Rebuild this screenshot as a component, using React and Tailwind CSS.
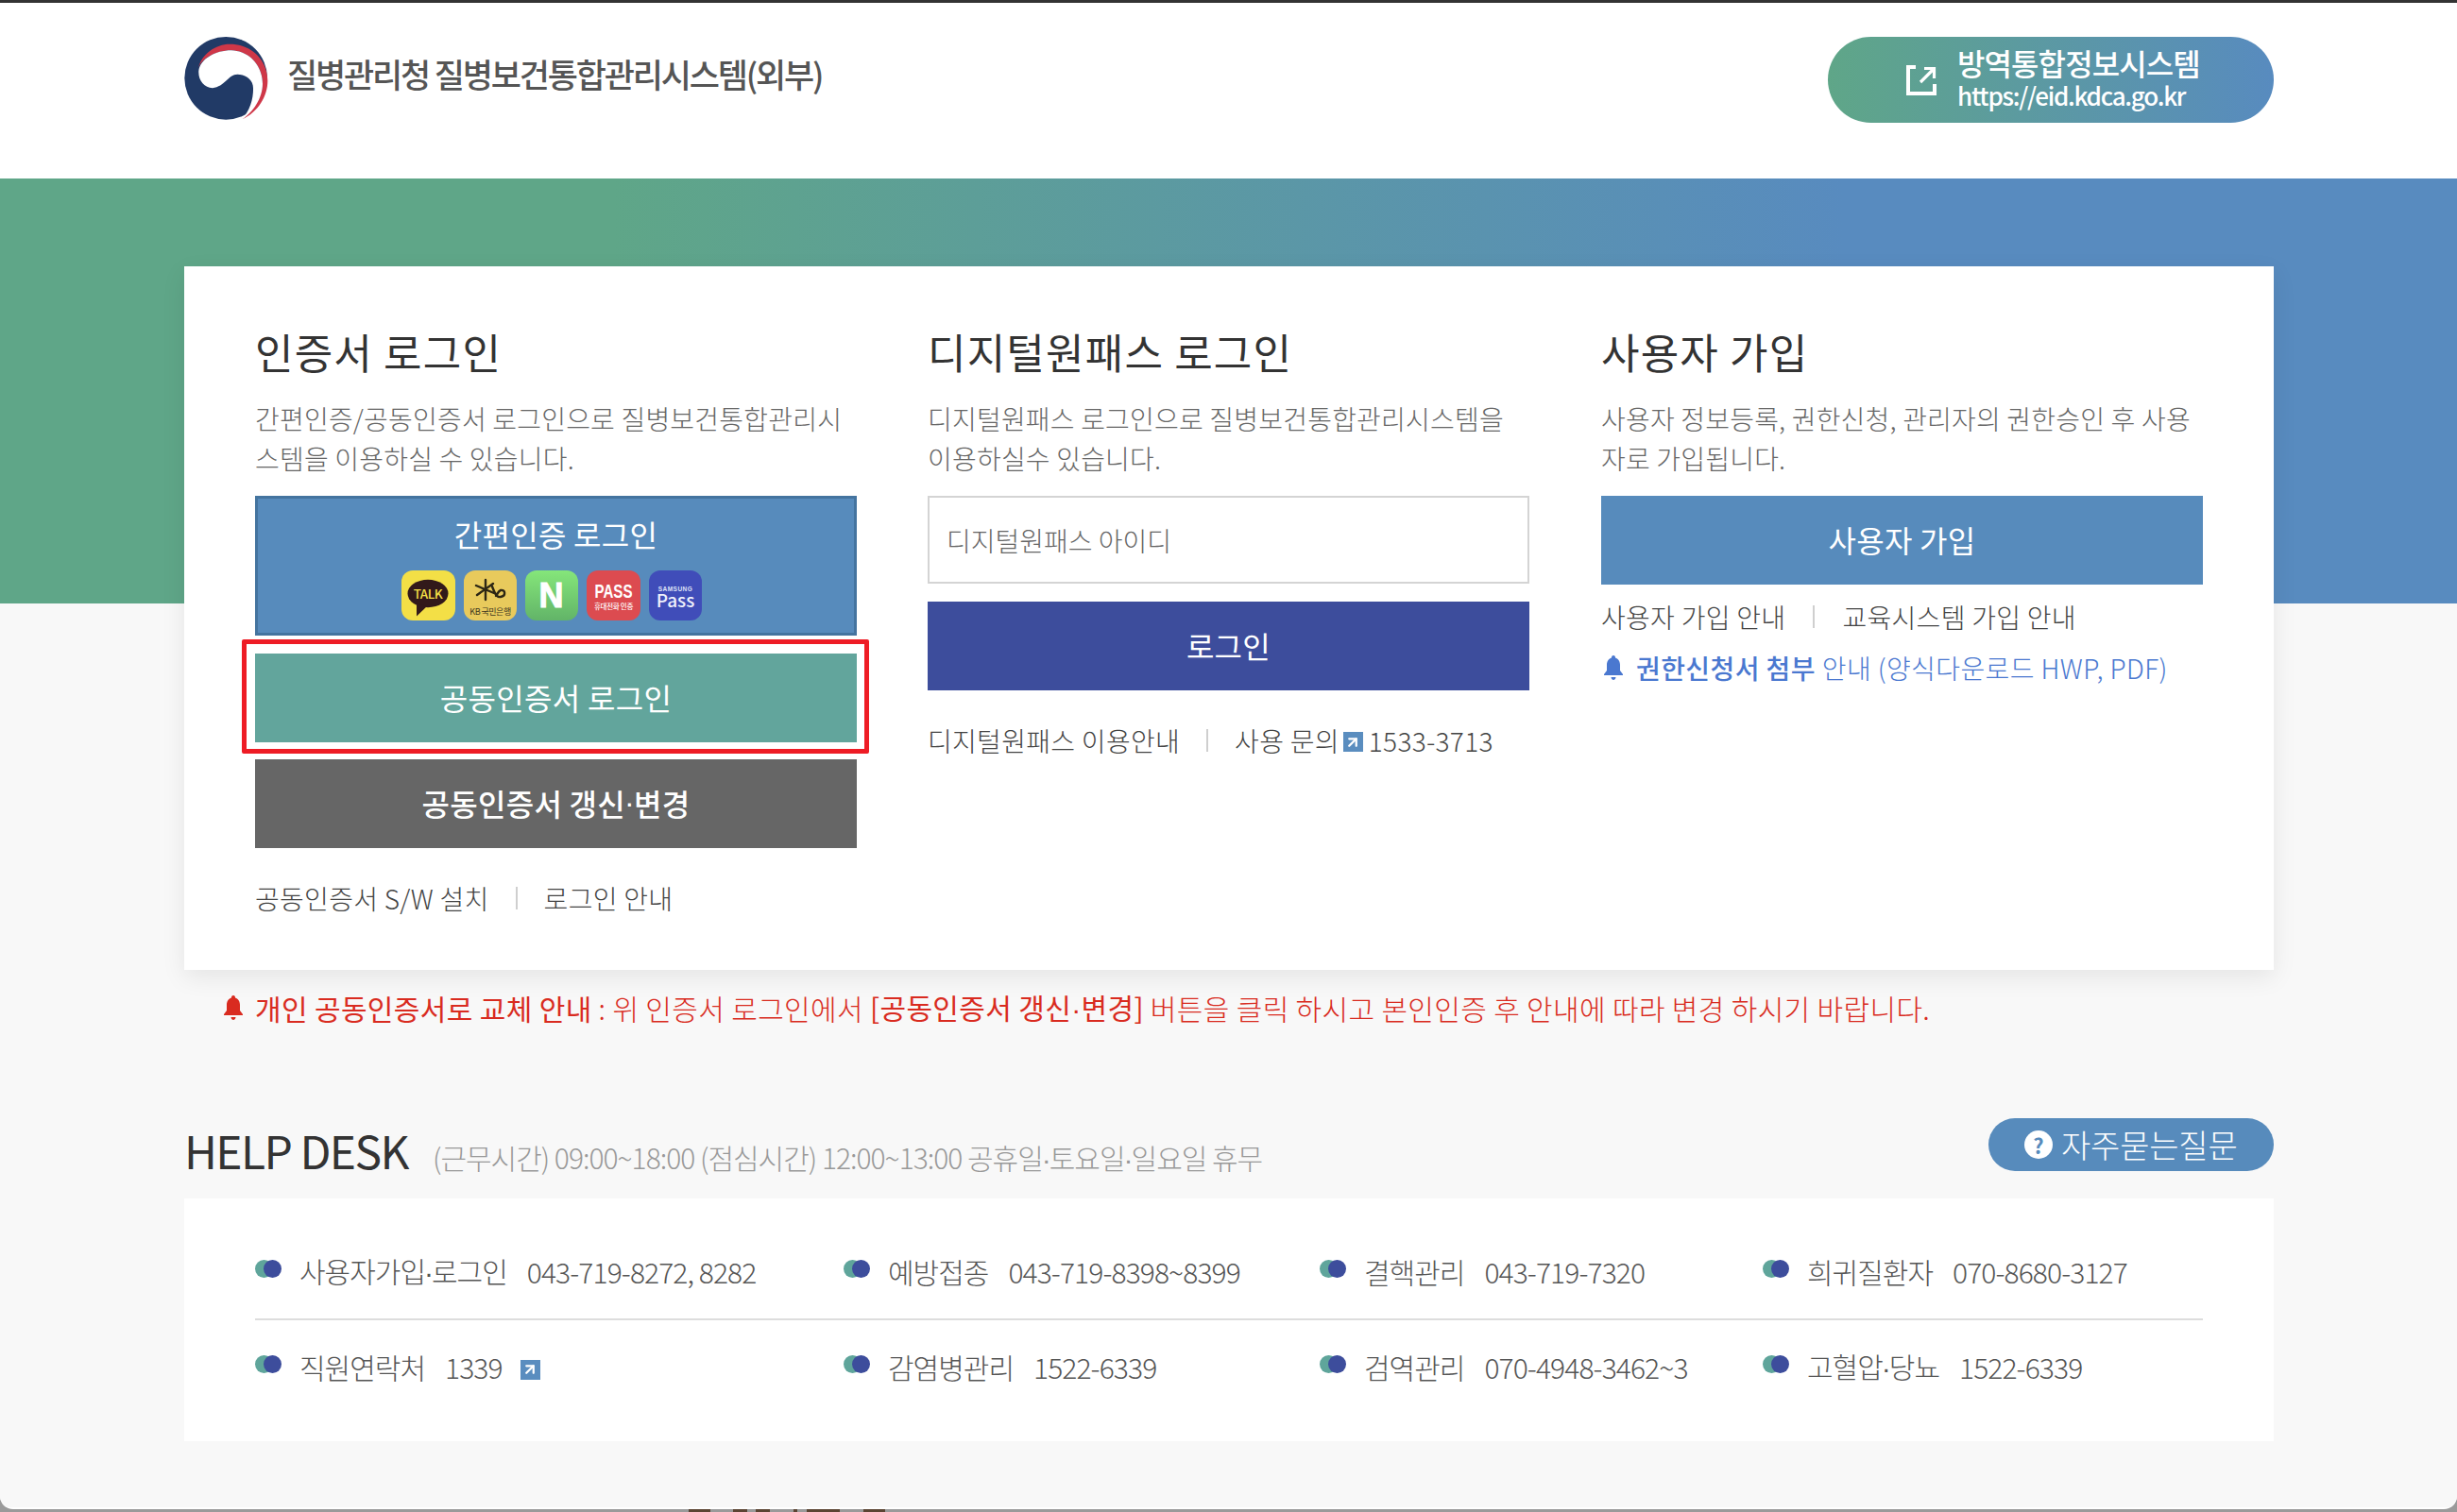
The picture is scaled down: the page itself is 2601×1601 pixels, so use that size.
import React from "react";
import { ArrowUpRight } from "lucide-react";

const FONT = "font-['Noto_Sans_CJK_KR','Noto_Sans',sans-serif]";
const svgFont = "'Noto Sans CJK KR', sans-serif";

const Logo = () => (
  <svg viewBox="30 15 268 265" className="w-[89px] h-[88px]">
    <circle cx="163" cy="147" r="132" fill="#213a66" />
    <path
      d="M75 115 C85 70 130 38 175 38 C245 38 296 90 296 155 C296 205 265 255 215 278 C250 250 278 210 280 165 C280 110 240 60 180 58 C130 58 85 85 75 115 Z"
      fill="#cf3748"
    />
    <path
      d="M76 125 C80 85 130 58 180 58 C240 60 280 110 280 165 C280 210 250 255 215 278 L212 280 C240 250 250 215 250 180 C250 150 225 135 200 135 C170 135 160 175 120 178 C95 178 75 155 76 125 Z"
      fill="#fff"
    />
  </svg>
);

const Bell = ({ className }) => (
  <svg viewBox="0 0 20 26" className={className} fill="currentColor">
    <path d="M10 0 C11.5 0 12 1 12 2.5 C15.5 3.5 17 7 17 10 V16 L20 20 V21 H0 V20 L3 16 V10 C3 7 4.5 3.5 8 2.5 C8 1 8.5 0 10 0 Z M7.5 23 H12.5 C12.5 25 11 26 10 26 C9 26 7.5 25 7.5 23 Z" />
  </svg>
);

const ExtIcon = () => (
  <span className="inline-flex w-[21px] h-[21px] items-center justify-center bg-[#5a8dbf] text-white">
    <ArrowUpRight size={18} strokeWidth={3} />
  </span>
);

const Divider = () => <span className="inline-block w-[2px] h-[24px] bg-[#cfcfcf]" />;

// the middle dot is much narrower in the original font
const Dotted = ({ text }) =>
  text.split("·").map((part, i) => (
    <React.Fragment key={i}>
      {i > 0 && <span className="font-['Liberation_Sans',sans-serif] -mx-[1px]">·</span>}
      {part}
    </React.Fragment>
  ));

const AuthIcons = () => (
  <div className="flex justify-center gap-[9px] mt-[15px] pr-[10px]">
    <svg viewBox="0 0 57 53" className="w-[57px] h-[53px] rounded-[12px] bg-[#f3df46]">
      <ellipse cx="28" cy="24.5" rx="21.5" ry="14.7" fill="#32191a" />
      <path d="M16 35 L16 48.5 L27 38 Z" fill="#32191a" />
      <text x="28" y="29.5" textAnchor="middle" fontSize="13.5" fontWeight="500" fill="#f3df46" fontFamily={svgFont} letterSpacing="-0.5">
        TALK
      </text>
    </svg>
    <svg viewBox="0 0 56 53" className="w-[56px] h-[53px] rounded-[12px] bg-[#e8ca5c]">
      <g stroke="#2c2614" strokeWidth="2.4" strokeLinecap="round" fill="none">
        <path d="M13 16 L32 24" />
        <path d="M14 26 L31 14" />
        <path d="M23 10 L23 31" />
        <path d="M30 17 C33 25 35 29 39 28 C45 27 44 20 39 21 C36 22 36 25 34 27" />
      </g>
      <text x="28" y="47" textAnchor="middle" fontSize="9" fontWeight="400" fill="#3a3420" fontFamily={svgFont} letterSpacing="-0.5">
        KB 국민은행
      </text>
    </svg>
    <div className="w-[56px] h-[53px] rounded-[12px] bg-[linear-gradient(#85e67a,#62b468)] flex items-center justify-center">
      <span className="text-white text-[36px] leading-none font-black font-['Liberation_Sans',sans-serif] [-webkit-text-stroke:1px_white]">N</span>
    </div>
    <svg viewBox="0 0 57 53" className="w-[57px] h-[53px] rounded-[12px] bg-[#dc4b50]">
      <text x="28.5" y="29" textAnchor="middle" fontSize="20" fontWeight="700" fill="#fff" fontFamily="'Liberation Sans', sans-serif" textLength="40" lengthAdjust="spacingAndGlyphs">
        PASS
      </text>
      <text x="28.5" y="41" textAnchor="middle" fontSize="7.5" fontWeight="500" fill="#fff" fontFamily={svgFont} letterSpacing="-0.3">
        휴대전화 인증
      </text>
    </svg>
    <svg viewBox="0 0 56 53" className="w-[56px] h-[53px] rounded-[12px] bg-[#404db9]">
      <text x="28" y="22" textAnchor="middle" fontSize="6.5" fontWeight="700" fill="#dfe3f7" fontFamily="'Liberation Sans', sans-serif" letterSpacing="0.5">
        SAMSUNG
      </text>
      <text x="28" y="39" textAnchor="middle" fontSize="19" fontWeight="500" fill="#eef0fb" fontFamily={svgFont}>
        Pass
      </text>
    </svg>
  </div>
);

const Column = ({ title, lines, children }) => (
  <div className="w-[637px] shrink-0">
    <h2 className="text-[44px] leading-[64px] text-[#333] font-normal tracking-[1.2px]">{title}</h2>
    <p className="mt-[18px] text-[28px] leading-[42px] text-[#666] font-light tracking-[0.2px] whitespace-nowrap">
      {lines[0]}
      <br />
      {lines[1]}
    </p>
    <div className="mt-[19px]">{children}</div>
  </div>
);

const Btn = ({ color, className = "", children }) => (
  <button className={`w-full h-[94px] flex items-center justify-center pb-[2px] text-white text-[32px] tracking-[0.3px] ${color} ${className}`}>
    {children}
  </button>
);

const contacts = [
  [
    ["사용자가입·로그인", "043-719-8272, 8282"],
    ["예방접종", "043-719-8398~8399"],
    ["결핵관리", "043-719-7320"],
    ["희귀질환자", "070-8680-3127"],
  ],
  [
    ["직원연락처", "1339", true],
    ["감염병관리", "1522-6339"],
    ["검역관리", "070-4948-3462~3"],
    ["고혈압·당뇨", "1522-6339"],
  ],
];

const Contact = ({ label, phone, ext }) => (
  <div className="flex items-center h-[60px] text-[30px] text-[#555] font-light tracking-[-1px] whitespace-nowrap">
    <span className="flex mb-[6px] mr-[19px]">
      <span className="w-[19px] h-[19px] rounded-full bg-[#5fa59b]" />
      <span className="w-[19px] h-[19px] rounded-full bg-[#3d4d9c] -ml-[10px]" />
    </span>
    <span><Dotted text={label} /></span>
    <span className="ml-[21px] tracking-[-0.9px]">{phone}</span>
    {ext && (
      <span className="ml-[19px] mt-[6px] flex">
        <ExtIcon />
      </span>
    )}
  </div>
);

export default function App() {
  return (
    <div className={`h-[1601px] bg-[#9a9a9a] overflow-hidden ${FONT}`}>
      <div className="h-[1598px] bg-white rounded-b-[14px] overflow-hidden">
        <header className="h-[189px] border-t-[3px] border-[#333] bg-white flex justify-between pl-[195px] pr-[194px] pt-[36px]">
          <div className="flex items-center h-[88px] self-start">
            <Logo />
            <span className="ml-[20px] text-[35px] font-medium text-[#555] tracking-[-2.2px] whitespace-nowrap -mt-[10px]">
              질병관리청 질병보건통합관리시스템(외부)
            </span>
          </div>
          <a className="w-[472px] h-[91px] rounded-full bg-[linear-gradient(90deg,#5fa688,#588bbf)] flex items-center text-white pl-[83px]">
            <svg viewBox="0 0 32 32" className="w-[32px] h-[32px]" fill="none" stroke="#fff" strokeWidth="4">
              <path d="M10 2 H2 V30 H30 V20" />
              <path d="M15 18 L28 5 M19 3.5 H29.5 V14" strokeWidth="3.2" />
            </svg>
            <div className="ml-[22px] -mt-[6px]">
              <div className="text-[32px] leading-[39px] font-medium tracking-[-0.9px]">방역통합정보시스템</div>
              <div className="text-[26px] leading-[30px] font-medium tracking-[-1.25px]">https://eid.kdca.go.kr</div>
            </div>
          </a>
        </header>

        <main className="h-[1407px] bg-[#f8f8f8] bg-[linear-gradient(90deg,#5fa688_25%,#588bbf_75%)] bg-no-repeat bg-[length:100%_450px] px-[194px]">
          <div className="pt-[93px] ml-[1px]">
            <section className="bg-white shadow-[0_8px_24px_rgba(0,0,0,0.08)] flex gap-[75px] px-[75px] pb-[56px] w-[2212px]">
              <div className="pt-[58px]">
                <Column
                  title="인증서 로그인"
                  lines={["간편인증/공동인증서 로그인으로 질병보건통합관리시", "스템을 이용하실 수 있습니다."]}
                >
                  <div className="w-full h-[148px] bg-[#578bbc] border-[3px] border-[#44749f] text-white text-[32px] text-center pt-[13px]">
                    <span className="block leading-[48px] tracking-[0.3px]">간편인증 로그인</span>
                    <AuthIcons />
                  </div>
                  <div className="relative mt-[19px]">
                    <Btn color="bg-[#62a59c]">공동인증서 로그인</Btn>
                    <div className="absolute -left-[14px] -right-[13px] -top-[15px] -bottom-[12px] border-[5px] border-[#ee1c25] rounded-[2px]" />
                  </div>
                  <Btn color="bg-[#666666]" className="mt-[18px] font-medium">
                    <Dotted text="공동인증서 갱신·변경" />
                  </Btn>
                  <div className="mt-[33px] h-[40px] flex items-center text-[28px] font-light text-[#444] tracking-[0.3px] whitespace-nowrap">
                    <span>공동인증서 S/W 설치</span>
                    <span className="mx-[28px] flex"><Divider /></span>
                    <span>로그인 안내</span>
                  </div>
                </Column>
              </div>

              <div className="pt-[58px]">
                <Column
                  title="디지털원패스 로그인"
                  lines={["디지털원패스 로그인으로 질병보건통합관리시스템을", "이용하실수 있습니다."]}
                >
                  <input
                    className="w-full h-[93px] border-[2px] border-[#d4d4d4] px-[18px] text-[28px] font-light placeholder:text-[#666] outline-none"
                    placeholder="디지털원패스 아이디"
                  />
                  <Btn color="bg-[#3d4d9c]" className="mt-[19px]">
                    로그인
                  </Btn>
                  <div className="mt-[33px] h-[40px] flex items-center text-[28px] font-light text-[#444] tracking-[0.3px] whitespace-nowrap">
                    <span>디지털원패스 이용안내</span>
                    <span className="mx-[28px] flex"><Divider /></span>
                    <span>사용 문의</span>
                    <span className="ml-[4px] mr-[6px] mt-[3px] flex"><ExtIcon /></span>
                    <span>1533-3713</span>
                  </div>
                </Column>
              </div>

              <div className="pt-[58px] ml-[1px]">
                <Column
                  title="사용자 가입"
                  lines={["사용자 정보등록, 권한신청, 관리자의 권한승인 후 사용", "자로 가입됩니다."]}
                >
                  <Btn color="bg-[#578bbc]" className="h-[93px]">
                    사용자 가입
                  </Btn>
                  <div className="mt-[14px] h-[40px] flex items-center text-[28px] font-light text-[#444] tracking-[0.3px] whitespace-nowrap">
                    <span>사용자 가입 안내</span>
                    <span className="mx-[29px] flex"><Divider /></span>
                    <span>교육시스템 가입 안내</span>
                  </div>
                  <div className="mt-[14px] h-[40px] flex items-center text-[28px] font-light text-[#4a78d0] tracking-[0.4px] whitespace-nowrap">
                    <Bell className="w-[20px] h-[26px] ml-[3px] mr-[14px]" />
                    <strong className="font-medium">권한신청서 첨부</strong>
                    <span className="ml-[7px]">안내 (양식다운로드 HWP, PDF)</span>
                  </div>
                </Column>
              </div>
            </section>

            <div className="mt-[20px] h-[40px] pl-[41px] flex items-center text-[30px] font-light text-[#d92b20] tracking-[0.35px] whitespace-nowrap">
              <Bell className="w-[22px] h-[26px] mr-[12px]" />
              <strong className="font-normal">개인 공동인증서로 교체 안내</strong>
              <span className="whitespace-pre"> : 위 인증서 로그인에서 </span>
              <strong className="font-normal">[공동인증서 갱신<span className="font-['Liberation_Sans',sans-serif]">·</span>변경]</strong>
              <span className="whitespace-pre"> 버튼을 클릭 하시고 본인인증 후 안내에 따라 변경 하시기 바랍니다.</span>
            </div>

            <div className="mt-[97px] h-[63px] flex justify-between items-start w-[2212px]">
              <div className="flex items-baseline mt-[5px] whitespace-nowrap">
                <h3 className="text-[48px] leading-[56px] font-normal text-[#333] tracking-[-1.6px]">HELP DESK</h3>
                <span className="ml-[26px] text-[30px] leading-[56px] font-light text-[#999] tracking-[-1px]">
                  <Dotted text="(근무시간) 09:00~18:00 (점심시간) 12:00~13:00 공휴일·토요일·일요일 휴무" />
                </span>
              </div>
              <a className="w-[302px] h-[56px] rounded-full bg-[#578bbc] text-white flex items-center pl-[38px]">
                <span className="w-[30px] h-[30px] rounded-full bg-white text-[#578bbc] text-[22px] font-bold flex items-center justify-center">?</span>
                <span className="ml-[9px] text-[34px] leading-none font-light tracking-[-0.2px]">자주묻는질문</span>
              </a>
            </div>

            <div className="mt-[22px] bg-white w-[2212px] h-[257px] px-[75px] pt-[47px]">
              {contacts.map((row, i) => (
                <div
                  key={i}
                  className={`grid grid-cols-[623px_504px_469px_1fr] ${i === 0 ? "pb-[20px] border-b-[2px] border-[#dddddd]" : "pt-[19px]"}`}
                >
                  {row.map(([label, phone, ext]) => (
                    <Contact key={label} label={label} phone={phone} ext={ext} />
                  ))}
                </div>
              ))}
            </div>
          </div>
        </main>
      </div>
      <div className="flex h-[3px] ml-[729px] gap-[25px]">
        <span className="w-[23px] bg-[#5b4433]" />
        <span className="w-[15px] bg-[#5b4433] -ml-[1px]" />
        <span className="w-[15px] bg-[#5b4433] -ml-[16px]" />
        <span className="w-[4px] bg-[#5b4433]" />
        <span className="w-[35px] bg-[#5b4433] -ml-[15px]" />
        <span className="w-[23px] bg-[#5b4433]" />
      </div>
    </div>
  );
}
